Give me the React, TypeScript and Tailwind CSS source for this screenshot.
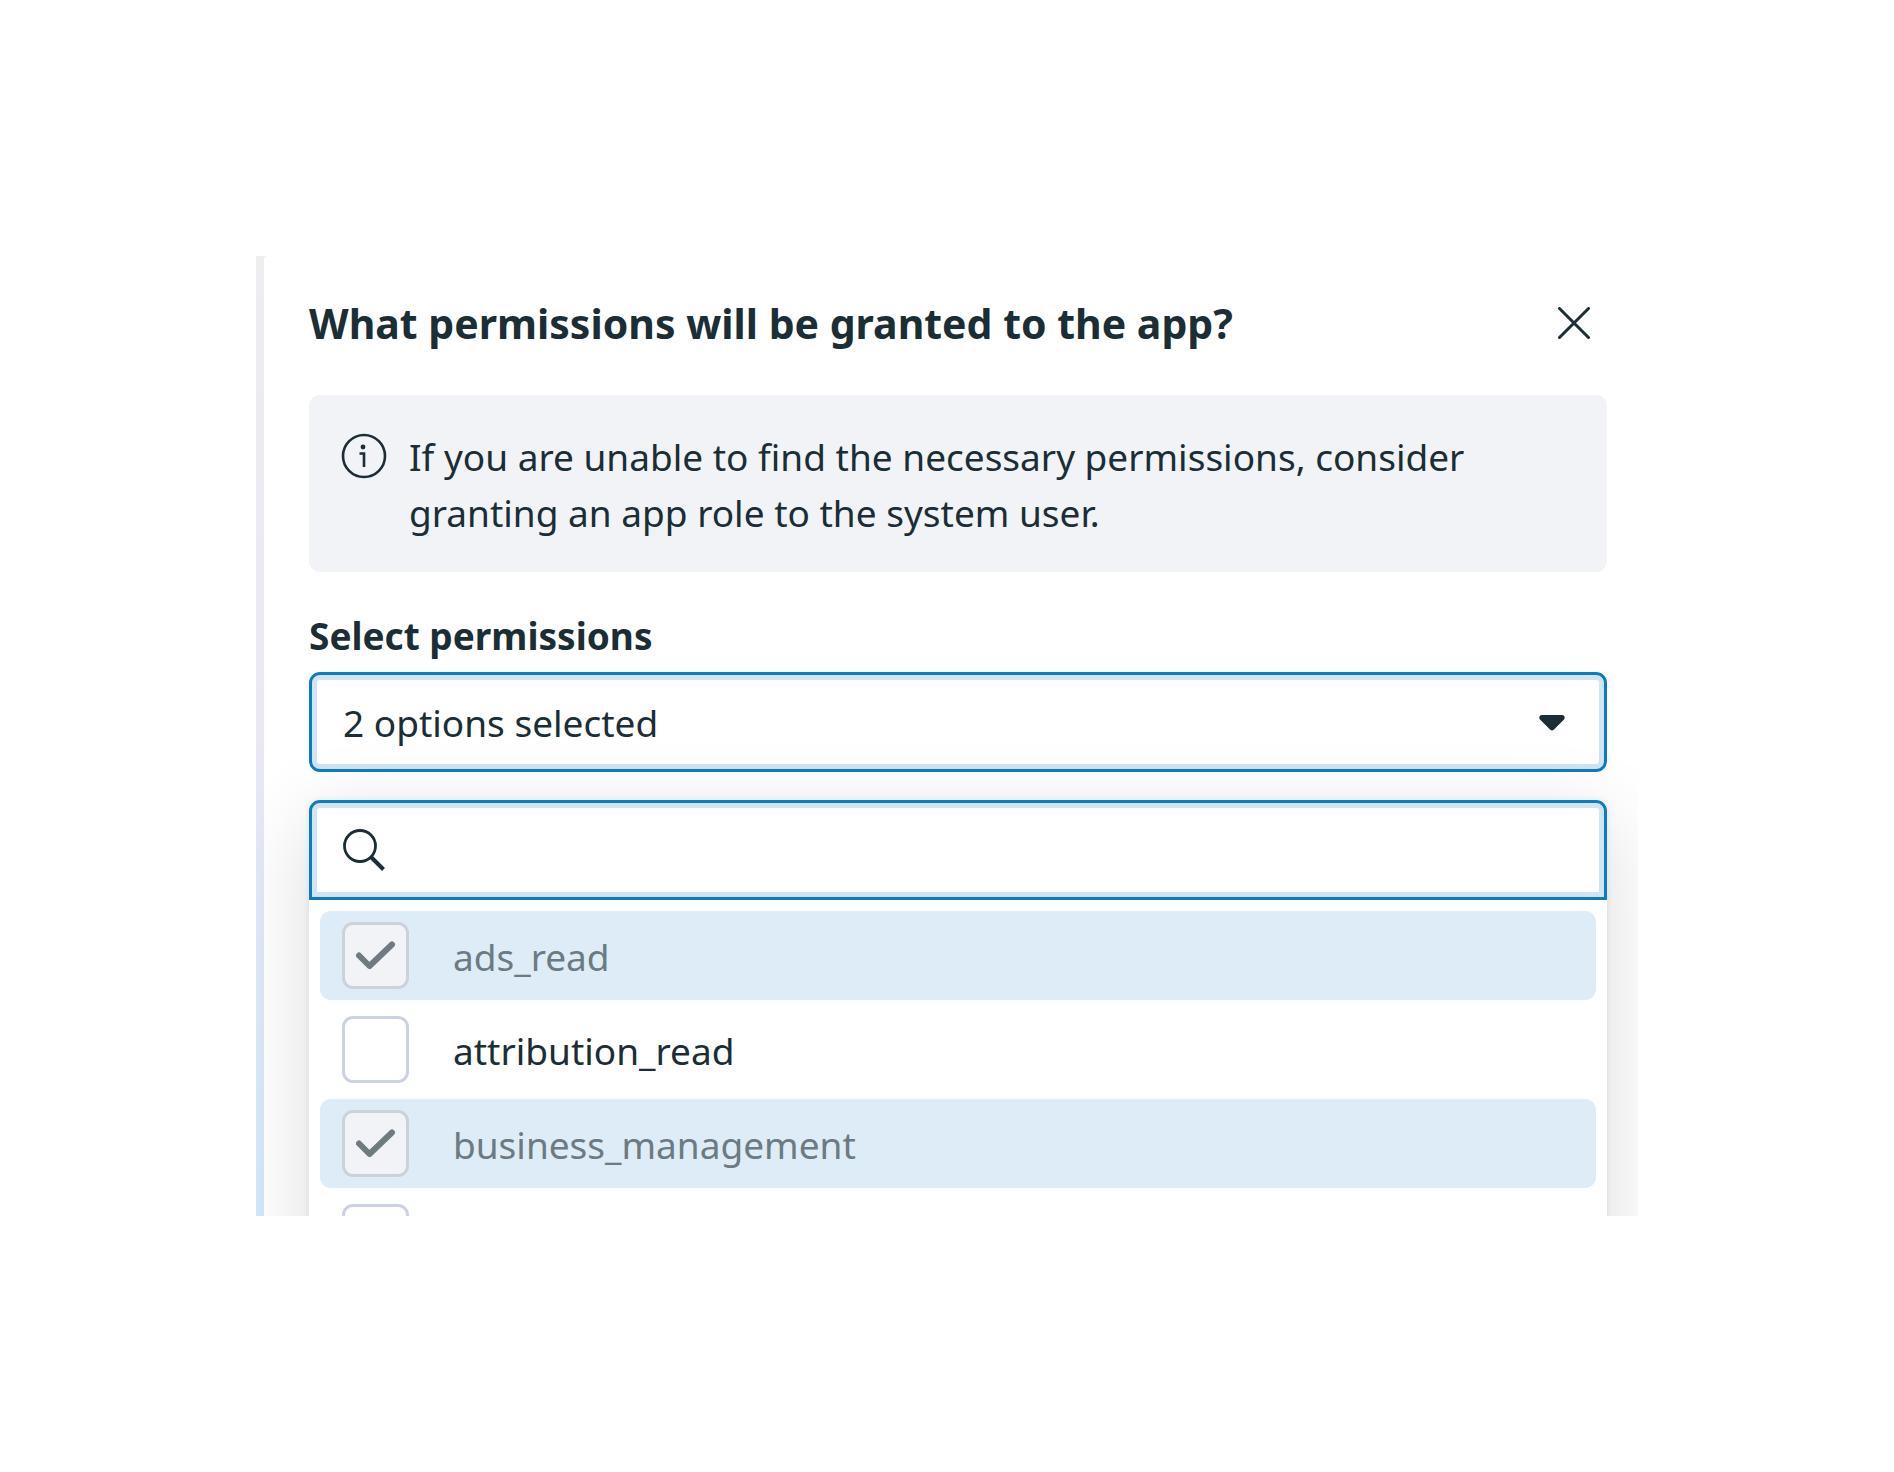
import { useState } from "react";

type Permission = {
  name: string;
  granted: boolean;
};

const permissions: Permission[] = [
  { name: "ads_read", granted: true },
  { name: "attribution_read", granted: false },
  { name: "business_management", granted: true },
];

export default function App() {
  const [query, setQuery] = useState("");
  const [picked, setPicked] = useState<string[]>([]);

  const toggle = (name: string) =>
    setPicked(p => (p.includes(name) ? p.filter(n => n !== name) : [...p, name]));

  return (
    <main className="min-h-screen bg-white px-64 py-64 font-['Noto_Sans',sans-serif] text-[#1b2d35]">
      <div className="flex overflow-hidden bg-gradient-to-b from-[#efedf0] via-[#e9e8f5] to-[#d3e8fa] pl-2">
        <section className="min-w-0 flex-1 rounded-tl-sm bg-white pl-[45px] pr-[31px]">
          {/* Title bar */}
          <header className="flex items-center justify-between pb-10 pr-4 pt-9">
            <h1 className="text-[41px] font-bold leading-[63px]">What permissions will be granted to the app?</h1>
            <button type="button" aria-label="Close">
              <svg width="34" height="34" viewBox="0 0 34 34" fill="none" stroke="currentColor" strokeWidth="3" strokeLinecap="round">
                <path d="M2.5 1.5 31.5 30.5M31.5 1.5 2.5 30.5" />
              </svg>
            </button>
          </header>

          <div className="flex gap-[22px] rounded-[11px] bg-[#f1f3f7] px-8 pb-[31px] pt-[34px]">
            <InfoIcon />
            <p className="text-[37px] leading-[56px]">
              If you are unable to find the necessary permissions, consider granting an app role to the system user.
            </p>
          </div>

          <label htmlFor="permissions" className="block pb-[6px] pt-[34px] text-[37px] font-bold leading-[60px]">
            Select permissions
          </label>
          <div className="relative">
            <select
              id="permissions"
              className="block h-[100px] w-full appearance-none rounded-[11px] border-3 border-[#0a7cc6] bg-white px-[31px] pt-0.5 text-[37px] outline-none inset-ring-5 inset-ring-[#d0e5f3]"
            >
              <option>2 options selected</option>
            </select>
            <svg className="pointer-events-none absolute right-[42px] top-[43px]" width="26" height="16" viewBox="0 0 26 16" fill="currentColor">
              <path d="M3 0H23C25.6 0 26.6 3 24.8 4.8L15 14.6Q13 16.4 11 14.6L1.200 4.800C-.6 3 .4 0 3 0Z" />
            </svg>
          </div>

          {/* Options menu, runs past the bottom of the panel */}
          <div className="relative -mb-24 mt-7 rounded-t-[11px] bg-white shadow-[0_0_6px_rgba(0,0,0,0.08),0_20px_84px_rgba(0,0,0,0.14)]">
            <div className="flex h-[100px] items-center gap-5 rounded-t-[11px] border-3 border-[#0a7cc6] px-[31px] inset-ring-5 inset-ring-[#d0e5f3]">
              <SearchIcon />
              <input
                type="text"
                aria-label="Search permissions"
                value={query}
                onChange={e => setQuery(e.target.value)}
                className="min-w-0 flex-1 text-[37px] outline-none"
              />
            </div>
            <ul className="flex flex-col gap-[5px] px-[11px] pb-[30px] pt-[11px]">
              {permissions.filter(p => p.name.includes(query)).map(p => (
                <li key={p.name}>
                  <label className={`flex h-[89px] items-center gap-11 rounded-[11px] px-[22px] text-[37px] leading-[56px] ${p.granted ? "bg-[#deecf7] text-[#6c7a82]" : ""}`}>
                    <Tick checked={p.granted || picked.includes(p.name)} disabled={p.granted} onChange={() => toggle(p.name)} />
                    <span className="pt-0.5">{p.name}</span>
                  </label>
                </li>
              ))}
              <li className="flex h-[89px] items-center px-[22px]">
                <Tick label="catalog_management" checked={picked.includes("catalog_management")} onChange={() => toggle("catalog_management")} />
              </li>
            </ul>
          </div>
        </section>
      </div>
    </main>
  );
}

function Tick({ checked, disabled, label, onChange }: { checked: boolean; disabled?: boolean; label?: string; onChange: () => void }) {
  return (
    <span className="grid shrink-0 place-items-center">
      <input
        type="checkbox"
        aria-label={label}
        checked={checked}
        disabled={disabled}
        onChange={onChange}
        className="col-start-1 row-start-1 size-[67px] appearance-none rounded-[11px] border-3 border-[#cbd2e0] bg-white disabled:border-[#cdd1da] disabled:bg-[#f1f3f7]"
      />
      {checked && (
        <svg className="pointer-events-none col-start-1 row-start-1" width="40" height="30" viewBox="0 0 40 30" fill="none" stroke="#6f7b81" strokeWidth="6" strokeLinecap="round" strokeLinejoin="round">
          <path d="M3 14.500 13.500 25 36 3.500" />
        </svg>
      )}
    </span>
  );
}

function InfoIcon() {
  return (
    <svg className="mt-1 shrink-0" width="46" height="46" viewBox="0 0 46 46" fill="none" stroke="currentColor" strokeWidth="2.600">
      <circle cx="23" cy="23" r="21" />
      <path d="M18.500 20.500H23V34" />
      <circle cx="22" cy="14" r="2.400" fill="currentColor" stroke="none" />
    </svg>
  );
}

function SearchIcon() {
  return (
    <svg className="shrink-0" width="42" height="42" viewBox="0 0 42 42" fill="none" stroke="currentColor">
      <circle cx="17" cy="17" r="15.500" strokeWidth="2.800" />
      <path d="M27.500 27.500 40.500 40.500" strokeWidth="4" />
    </svg>
  );
}
